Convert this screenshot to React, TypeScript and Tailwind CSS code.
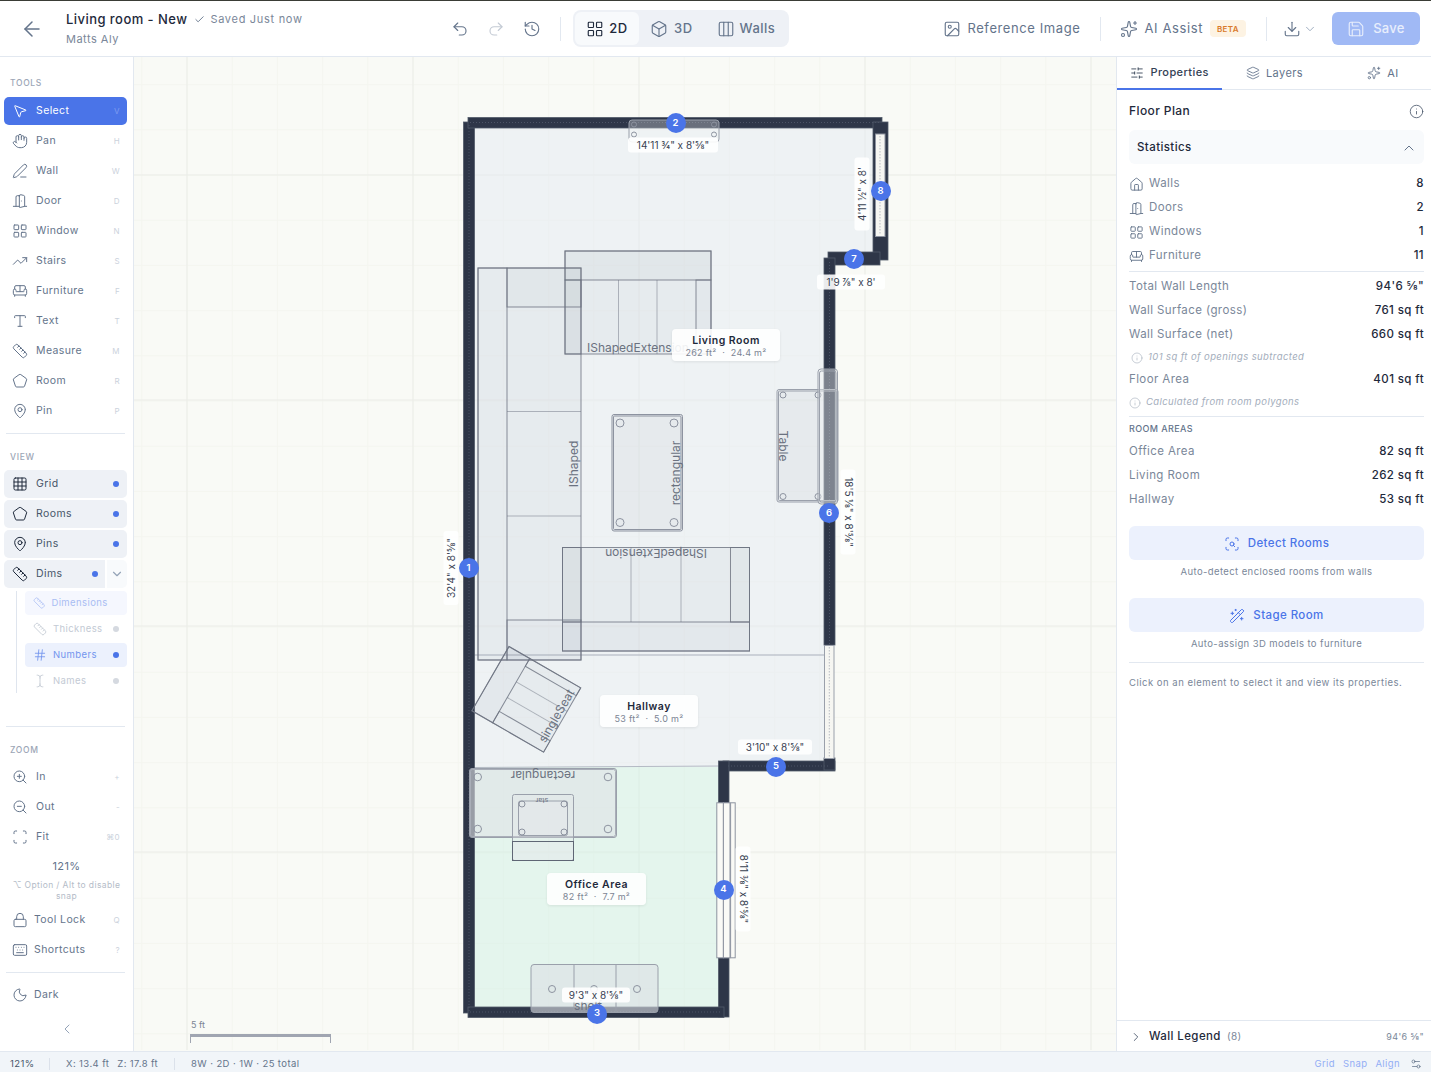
import React from "react";
import {
  ArrowLeft, Box, Check, ChevronDown, ChevronLeft, ChevronRight, ChevronUp, Columns3, DoorOpen, Download, Grid3x3, Hand,
  Hash, History, House, Image, Info, Keyboard, Layers, LayoutGrid, Lock, MapPin, Moon, MousePointer2, PenLine, Pentagon,
  Redo2, Ruler, Save, Scan, ScanSearch, Settings2, SlidersHorizontal, Sofa, Sparkles, TextCursor, TrendingUp, Type, Undo2,
  WandSparkles, ZoomIn, ZoomOut,
} from "lucide-react";

type IconType = React.ComponentType<{ size?: number; className?: string; strokeWidth?: number }>;

const tools: [IconType, string, string][] = [
  [Hand, "Pan", "H"],
  [PenLine, "Wall", "W"],
  [DoorOpen, "Door", "D"],
  [LayoutGrid, "Window", "N"],
  [TrendingUp, "Stairs", "S"],
  [Sofa, "Furniture", "F"],
  [Type, "Text", "T"],
  [Ruler, "Measure", "M"],
  [Pentagon, "Room", "R"],
  [MapPin, "Pin", "P"],
];

function SectionLabel({ children }: { children: string }) {
  return <div className="pl-[10px] text-[8.5px] leading-[12px] font-medium tracking-[0.08em] text-[#9ca6b6]">{children}</div>;
}

function ToolRow({ icon: Icon, label, keyName }: { icon: IconType; label: string; keyName: string }) {
  return (
    <div className="mx-[4px] flex h-[28px] w-[123px] items-center gap-[8px] rounded-[5px] pl-[8px] pr-[7px] text-[#64748b]">
      <Icon size={16} strokeWidth={1.5} />
      <span className="flex-1 text-[10.5px]">{label}</span>
      <span className="text-[8px] text-[#cbd2dc]">{keyName}</span>
    </div>
  );
}

function ViewRow({ icon: Icon, label }: { icon: IconType; label: string }) {
  return (
    <div className="mx-[4px] flex h-[28px] w-[123px] items-center gap-[8px] rounded-[5px] bg-[#eef1f6] pl-[8px] pr-[8px] text-[#1e293b]">
      <Icon size={16} strokeWidth={1.5} />
      <span className="flex-1 text-[10.5px] text-[#475569]">{label}</span>
      <span className="h-[6px] w-[6px] rounded-full bg-[#4a74e8]" />
    </div>
  );
}

function SubRow({ icon: Icon, label, box, dot, text }: { icon: IconType; label: string; box: string; dot: string; text: string }) {
  return (
    <div className={`flex h-[24px] w-[102px] items-center gap-[6px] rounded-[4px] pl-[8px] pr-[8px] ${box} ${text}`}>
      <Icon size={14} strokeWidth={1.5} />
      <span className="flex-1 text-[9.5px]">{label}</span>
      <span className={`h-[6px] w-[6px] rounded-full ${dot}`} />
    </div>
  );
}

function Sidebar() {
  return (
    <aside className="flex h-full w-[134px] shrink-0 flex-col border-r border-[#e2e8f0] bg-white pt-[20px]">
      <SectionLabel>TOOLS</SectionLabel>
      <div className="mt-[8px] flex flex-col gap-[2px]">
        <div className="mx-[4px] flex h-[28px] w-[123px] items-center gap-[8px] rounded-[5px] bg-[#4a74e8] pl-[8px] pr-[7px] text-white">
          <MousePointer2 size={16} strokeWidth={1.5} />
          <span className="flex-1 text-[10.5px]">Select</span>
          <span className="text-[8px] text-[#7d9bf0]">V</span>
        </div>
        {tools.map(([icon, label, keyName]) => (
          <ToolRow key={label} icon={icon} label={label} keyName={keyName} />
        ))}
      </div>
      <div className="mx-[6px] mt-[8px] h-px w-[119px] bg-[#e2e8f0]" />
      <div className="mt-[17px]">
        <SectionLabel>VIEW</SectionLabel>
      </div>
      <div className="mt-[7px] flex flex-col gap-[2px]">
        <ViewRow icon={Grid3x3} label="Grid" />
        <ViewRow icon={Pentagon} label="Rooms" />
        <ViewRow icon={MapPin} label="Pins" />
        <div className="mx-[4px] flex h-[28px] w-[123px] gap-[2px]">
          <div className="flex w-[101px] items-center gap-[8px] rounded-l-[5px] bg-[#eef1f6] pl-[8px] pr-[7px] text-[#1e293b]">
            <Ruler size={16} strokeWidth={1.5} />
            <span className="flex-1 text-[10.5px] text-[#475569]">Dims</span>
            <span className="h-[6px] w-[6px] rounded-full bg-[#4a74e8]" />
          </div>
          <div className="flex flex-1 items-center justify-center rounded-r-[5px] bg-[#f8fafc] text-[#94a3b8]">
            <ChevronDown size={14} />
          </div>
        </div>
      </div>
      <div className="ml-[16px] mt-[3px] flex h-[102px] w-[111px] flex-col gap-[2px] border-l border-[#dfe5ee] pl-[8px]">
        <SubRow icon={Ruler} label="Dimensions" box="bg-[#f5f7fe]" dot="" text="text-[#a9bdf3]" />
        <SubRow icon={Ruler} label="Thickness" box="" dot="bg-[#d5d9e0]" text="text-[#c3cad4]" />
        <SubRow icon={Hash} label="Numbers" box="bg-[#ecf1fd]" dot="bg-[#4a74e8]" text="text-[#7295ee]" />
        <SubRow icon={TextCursor} label="Names" box="" dot="bg-[#d5d9e0]" text="text-[#c3cad4]" />
      </div>
      <div className="mx-[6px] mt-[33px] h-px w-[119px] bg-[#e2e8f0]" />
      <div className="mt-[17px]">
        <SectionLabel>ZOOM</SectionLabel>
      </div>
      <div className="mt-[7px] flex flex-col gap-[2px]">
        <ToolRow icon={ZoomIn} label="In" keyName="+" />
        <ToolRow icon={ZoomOut} label="Out" keyName="-" />
        <ToolRow icon={Scan} label="Fit" keyName="⌘0" />
      </div>
      <div className="mt-[8px] text-center text-[11px] leading-[14px] text-[#64748b]">121%</div>
      <div className="mt-[7px] px-[8px] text-center text-[8.5px] leading-[11px] text-[#b4bcc8]">⌥ Option / Alt to disable snap</div>
      <div className="mt-[4px] flex flex-col gap-[2px]">
        <div className="mx-[4px] flex h-[28px] w-[123px] items-center gap-[6px] pl-[8px] pr-[7px] text-[#64748b]">
          <Lock size={16} strokeWidth={1.5} />
          <span className="flex-1 text-[10.5px]">Tool Lock</span>
          <span className="text-[8px] text-[#cbd2dc]">Q</span>
        </div>
        <div className="mx-[4px] flex h-[28px] w-[123px] items-center gap-[6px] pl-[8px] pr-[7px] text-[#64748b]">
          <Keyboard size={16} strokeWidth={1.5} />
          <span className="flex-1 text-[10.5px]">Shortcuts</span>
          <span className="text-[8px] text-[#cbd2dc]">?</span>
        </div>
      </div>
      <div className="mx-[6px] mt-[8px] h-px w-[119px] bg-[#e2e8f0]" />
      <div className="mx-[4px] mt-[8px] flex h-[28px] items-center gap-[6px] pl-[8px] text-[#64748b]">
        <Moon size={16} strokeWidth={1.5} />
        <span className="text-[10.5px]">Dark</span>
      </div>
      <div className="mt-[12px] flex justify-center text-[#94a3b8]">
        <ChevronLeft size={16} strokeWidth={1.5} />
      </div>
    </aside>
  );
}

function Header() {
  return (
    <header className="flex h-[57px] shrink-0 items-center border-t border-b border-t-[#3a3d36] border-b-[#e2e8f0] bg-white">
      <ArrowLeft size={24} strokeWidth={1.5} className="ml-[20px] text-[#64748b]" />
      <div className="ml-[22px] w-[385px]">
        <div className="-mt-[1px] flex items-center">
          <span className="text-[13px] leading-[18px] font-medium tracking-[0.45px] text-[#1e293b]">Living room - New</span>
          <Check size={11} className="ml-[7px] text-[#64748b]" />
          <span className="ml-[5px] text-[11px] tracking-[0.7px] text-[#7a8799]">Saved Just now</span>
        </div>
        <div className="mt-[4px] text-[11px] leading-[14px] tracking-[0.5px] text-[#7a8799]">Matts Aly</div>
      </div>
      <Undo2 size={18} strokeWidth={1.5} className="text-[#64748b]" />
      <Redo2 size={18} strokeWidth={1.5} className="ml-[18px] text-[#c3cad4]" />
      <History size={18} strokeWidth={1.5} className="ml-[18px] text-[#64748b]" />
      <div className="ml-[19px] h-[24px] w-px bg-[#e2e8f0]" />
      <div className="ml-[12px] flex h-[37px] w-[216px] items-center rounded-[8px] bg-[#eef1f6] p-[2px] tracking-[0.5px]">
        <div className="flex h-[33px] w-[64px] items-center justify-center gap-[5px] rounded-[6px] bg-[#f8fafc] text-[#1e293b]">
          <LayoutGrid size={18} strokeWidth={1.5} />
          <span className="text-[13px] font-medium">2D</span>
        </div>
        <div className="ml-[11px] flex items-center gap-[6px] text-[#64748b]">
          <Box size={18} strokeWidth={1.5} />
          <span className="text-[13px] font-medium">3D</span>
        </div>
        <div className="ml-[24px] flex items-center gap-[5px] text-[#64748b]">
          <Columns3 size={18} strokeWidth={1.5} />
          <span className="text-[13px] font-medium">Walls</span>
        </div>
      </div>
      <div className="ml-auto mr-[11px] flex items-center">
        <div className="flex items-center gap-[6px] text-[#64748b]">
          <Image size={18} strokeWidth={1.5} />
          <span className="text-[13px] tracking-[0.6px]">Reference Image</span>
        </div>
        <div className="ml-[19px] h-[24px] w-px bg-[#e2e8f0]" />
        <div className="ml-[19px] flex items-center gap-[7px] text-[#64748b]">
          <Sparkles size={18} strokeWidth={1.5} />
          <span className="text-[13px] tracking-[0.6px]">AI Assist</span>
        </div>
        <span className="ml-[7px] flex h-[17px] w-[36px] items-center justify-center rounded-[4px] bg-[#fdf3e3] text-[8px] font-semibold tracking-[0.4px] text-[#d97a2b]">BETA</span>
        <div className="ml-[20px] h-[24px] w-px bg-[#e2e8f0]" />
        <Download size={18} strokeWidth={1.5} className="ml-[16px] text-[#64748b]" />
        <ChevronDown size={14} strokeWidth={1.5} className="ml-[2px] text-[#94a3b8]" />
        <div className="ml-[15px] flex h-[33px] w-[88px] items-center justify-center gap-[8px] rounded-[6px] bg-[#a0b9f5] text-[#e8eefc]">
          <Save size={18} strokeWidth={1.5} />
          <span className="text-[13px] font-medium tracking-[0.3px]">Save</span>
        </div>
      </div>
    </header>
  );
}

const minorX = Array.from({ length: 22 }, (_, i) => 141.8 + i * 45.2);
const minorY = Array.from({ length: 23 }, (_, i) => 84.6 + i * 45.2);
const majorX = [187, 413, 639, 865, 1091];
const majorY = [175, 400, 626, 852];

const furn = "fill-[#64748b]/[0.05] stroke-[#6b7280]/80";
const knob = "fill-none stroke-[#8d93a0]";
const lbl = "fill-[#6b7280] text-[12px] font-['Inter',sans-serif]";

function FloorPlan() {
  return (
    <svg className="absolute left-0 top-0 h-[993px] w-[982px]" viewBox="134 57 982 993">
      {minorX.map((x) => <line key={x} x1={x} x2={x} y1={57} y2={1050} stroke="#f4f5f0" />)}
      {minorY.map((y) => <line key={y} x1={134} x2={1116} y1={y} y2={y} stroke="#f4f5f0" />)}
      {majorX.map((x) => <line key={x} x1={x} x2={x} y1={57} y2={1050} stroke="#ebede8" />)}
      {majorY.map((y) => <line key={y} x1={134} x2={1116} y1={y} y2={y} stroke="#ebede8" />)}

      {/* rooms */}
      <polygon points="474,127 875,127 875,252 829,252 829,766 720,767 474,767" fill="#e4eaf2" fillOpacity="0.5" />
      <polygon points="474,767 720,767 720,1007 474,1007" fill="#d0f0e4" fillOpacity="0.5" />
      <line x1="474" x2="825" y1="655" y2="655" stroke="#aab0bb" strokeWidth="1.2" />
      <line x1="474" x2="722" y1="767.5" y2="766" stroke="#b4bac4" />

      {/* walls */}
      <g fill="#2e3648" stroke="#525a69" strokeWidth="0.8">
        <rect x="463.5" y="122" width="11" height="891" />
        <rect x="468" y="117.5" width="414" height="10.5" />
        <rect x="873" y="122" width="15" height="138" />
        <rect x="828" y="252" width="52" height="13" />
        <rect x="824" y="258" width="11" height="387" />
        <rect x="723" y="761" width="112" height="10" />
        <rect x="824" y="758" width="11" height="12" />
        <rect x="718.5" y="761" width="10.5" height="42" />
        <rect x="718.5" y="958" width="10.5" height="59" />
        <rect x="468" y="1007" width="256" height="10.5" />
      </g>
      <g stroke="#4b5365" strokeDasharray="1 2" fill="none">
        <line x1="469" x2="469" y1="125" y2="1013" />
        <line x1="470" x2="880" y1="122.5" y2="122.5" />
        <line x1="470" x2="720" y1="1012" y2="1012" />
        <line x1="829.5" x2="829.5" y1="262" y2="645" />
        <line x1="728" x2="830" y1="766" y2="766" />
      </g>

      {/* windows */}
      <rect x="875.5" y="134" width="9.5" height="102.5" fill="#f6f6f2" stroke="#8d93a0" />
      <line x1="880" x2="880" y1="136" y2="235" stroke="#b9bdc4" strokeDasharray="1.5 1.5" />
      <rect x="824.5" y="645.5" width="9.5" height="113" fill="#f6f6f2" stroke="#9aa0ab" />
      <line x1="829.3" x2="829.3" y1="647" y2="757" stroke="#b9bdc4" strokeDasharray="1.5 1.5" />
      <g fill="#fafaf6" stroke="#8d93a0">
        <rect x="716.8" y="802.8" width="6.6" height="155" />
        <rect x="723.4" y="802.8" width="6.6" height="155" />
        <rect x="730.6" y="802.8" width="4.6" height="155" />
      </g>

      {/* upper sofa */}
      <g className={furn}>
        <rect x="565" y="251" width="146" height="103" />
        <rect x="565" y="251" width="146" height="29" className="fill-[#64748b]/[0.03]" />
        <rect x="565" y="280" width="16" height="74" className="fill-[#64748b]/[0.04]" />
        <rect x="696" y="280" width="15" height="74" className="fill-[#64748b]/[0.02]" />
        <line x1="618.5" x2="618.5" y1="280" y2="354" opacity="0.6" />
        <line x1="657" x2="657" y1="280" y2="354" opacity="0.6" />
      </g>
      <text x="587" y="352" className={lbl}>IShapedExtension</text>

      {/* long sofa */}
      <g className={furn}>
        <rect x="478" y="268" width="103" height="392" />
        <rect x="478" y="268" width="29" height="392" className="fill-transparent" />
        <rect x="507" y="268" width="74" height="39" className="fill-[#64748b]/[0.03]" />
        <rect x="507" y="620" width="74" height="40" className="fill-[#64748b]/[0.02]" />
        <line x1="507" x2="581" y1="411.5" y2="411.5" opacity="0.6" />
        <line x1="507" x2="581" y1="516" y2="516" opacity="0.6" />
      </g>
      <text transform="translate(578 464) rotate(-90)" textAnchor="middle" className={lbl}>IShaped</text>

      {/* coffee table */}
      <g className="fill-[#64748b]/[0.06] stroke-[#8d93a0]">
        <rect x="612" y="414.5" width="70.5" height="116.5" rx="2" />
        <rect x="613.5" y="416" width="67.5" height="113.5" rx="1" fill="none" />
      </g>
      <circle cx="620" cy="423" r="4" className={knob} />
      <circle cx="674" cy="423" r="4" className={knob} />
      <circle cx="620" cy="522.5" r="4" className={knob} />
      <circle cx="674" cy="522.5" r="4" className={knob} />
      <text transform="translate(680 473) rotate(-90)" textAnchor="middle" className={lbl}>rectangular</text>

      {/* lower sofa */}
      <g className={furn}>
        <rect x="562.5" y="547.5" width="187" height="103.5" />
        <rect x="562.5" y="622" width="187" height="29" className="fill-[#64748b]/[0.02]" />
        <rect x="562.5" y="547.5" width="18.5" height="74.5" className="fill-[#64748b]/[0.03]" />
        <rect x="730.5" y="547.5" width="19" height="74.5" className="fill-[#64748b]/[0.03]" />
        <line x1="631" x2="631" y1="547.5" y2="622" opacity="0.6" />
        <line x1="681" x2="681" y1="547.5" y2="622" opacity="0.6" />
      </g>
      <text transform="translate(656 549) rotate(180)" textAnchor="middle" className={lbl}>IShapedExtension</text>

      {/* side table and console */}
      <g className="fill-[#64748b]/[0.06] stroke-[#9aa0ab]">
        <rect x="777" y="389.5" width="61" height="112.5" rx="2" />
        <rect x="778.5" y="391" width="58" height="109.5" rx="1" fill="none" />
      </g>
      <circle cx="783" cy="395" r="3" className={knob} />
      <circle cx="818" cy="395" r="3" className={knob} />
      <circle cx="783" cy="496.5" r="3" className={knob} />
      <circle cx="818" cy="496.5" r="3" className={knob} />
      <text transform="translate(779 446) rotate(90)" textAnchor="middle" className={lbl}>Table</text>
      <rect x="818" y="369" width="19.5" height="135" rx="3" fill="#f3f4f6" fillOpacity="0.4" stroke="#9aa0ab" />
      <rect x="819.5" y="371" width="16.5" height="131" rx="2" fill="none" stroke="#9aa0ab" />

      {/* armchair */}
      <g transform="translate(526.3 699.3) rotate(30)" className={furn}>
        <rect x="-41.4" y="-37.1" width="82.8" height="74.2" />
        <rect x="-41.4" y="-37.1" width="24" height="74.2" className="fill-[#64748b]/[0.02]" />
        <rect x="-17.4" y="-37.1" width="58.8" height="9" className="fill-transparent" />
        <rect x="-17.4" y="24" width="58.8" height="13.1" className="fill-transparent" />
        <line x1="-17.4" x2="41.4" y1="-10" y2="-10" opacity="0.6" />
        <line x1="-17.4" x2="41.4" y1="8" y2="8" opacity="0.6" />
      </g>
      <text transform="translate(560 718) rotate(-60)" textAnchor="middle" className={lbl}>singleSeat</text>

      {/* desk, chair */}
      <rect x="469.5" y="768.5" width="147" height="69" rx="2.5" fill="#dfe2e6" fillOpacity="0.6" stroke="#9aa0ab" />
      <rect x="470.5" y="769.5" width="145" height="67" rx="2" fill="none" stroke="#a9aeb8" />
      <circle cx="477.7" cy="777" r="3.8" className={knob} />
      <circle cx="608" cy="777" r="3.8" className={knob} />
      <circle cx="477.7" cy="829" r="3.8" className={knob} />
      <circle cx="608" cy="829" r="3.8" className={knob} />
      <text transform="translate(543 771) rotate(180)" textAnchor="middle" className={lbl}>rectangular</text>
      <rect x="512.5" y="794.5" width="61" height="66" rx="2" fill="#e5e7eb" fillOpacity="0.3" stroke="#9aa0ab" />
      <rect x="518.5" y="801" width="49" height="34.5" rx="2" fill="#e5e7eb" fillOpacity="0.4" stroke="#9aa0ab" />
      <rect x="512.5" y="841.5" width="61" height="19" fill="#e5e7eb" fillOpacity="0.3" stroke="#5f6675" />
      <circle cx="522" cy="804" r="3" className={knob} />
      <circle cx="564" cy="804" r="3" className={knob} />
      <circle cx="522" cy="832" r="3" className={knob} />
      <circle cx="564" cy="832" r="3" className={knob} />
      <text transform="translate(542 798) rotate(180)" textAnchor="middle" className="fill-[#6b7280] text-[7px]">star</text>

      {/* shelf */}
      <rect x="531" y="964.5" width="127" height="48" rx="3" fill="#dcdfe4" fillOpacity="0.6" stroke="#9aa0ab" />
      <line x1="574" x2="574" y1="965" y2="1012" stroke="#9aa0ab" />
      <line x1="616" x2="616" y1="965" y2="1012" stroke="#9aa0ab" />
      <circle cx="552" cy="989" r="3.5" className={knob} />
      <circle cx="594" cy="989" r="3.5" className={knob} />
      <circle cx="637" cy="989" r="3.5" className={knob} />
      <text x="588" y="1010" textAnchor="middle" className={lbl}>shelf</text>

      {/* console behind dim 2 */}
      <rect x="629" y="120" width="90" height="22" rx="3" fill="#f3f4f6" fillOpacity="0.3" stroke="#9aa0ab" />
      <circle cx="634" cy="124.5" r="2.5" className={knob} />
      <circle cx="714" cy="124.5" r="2.5" className={knob} />
      <circle cx="634" cy="134.5" r="2.5" className={knob} />
      <circle cx="714" cy="134.5" r="2.5" className={knob} />
    </svg>
  );
}

function Dim({ className, children }: { className: string; children: string }) {
  return (
    <div className={`absolute flex h-[15px] -translate-x-1/2 -translate-y-1/2 items-center justify-center rounded-[3px] bg-white/90 text-[10px] whitespace-nowrap text-[#374151] ${className}`}>
      {children}
    </div>
  );
}

function Badge({ className, children }: { className: string; children: string }) {
  return (
    <div className={`absolute flex h-[20px] w-[20px] -translate-x-1/2 -translate-y-1/2 items-center justify-center rounded-full bg-[#4a74e8] text-[9.5px] font-semibold text-white ${className}`}>
      {children}
    </div>
  );
}

function RoomTag({ className, name, area }: { className: string; name: string; area: string }) {
  return (
    <div className={`absolute flex h-[32px] flex-col items-center justify-center rounded-[4px] bg-white/90 shadow-[0_1px_3px_rgba(0,0,0,0.08)] ${className}`}>
      <div className="pt-[2px] text-[10.5px] leading-[12px] font-semibold tracking-[0.5px] text-[#1e293b]">{name}</div>
      <div className="text-[9px] leading-[11px] tracking-[0.3px] whitespace-pre text-[#7c8594]">{area}</div>
    </div>
  );
}

function Canvas() {
  return (
    <main className="relative h-full flex-1 overflow-hidden bg-[#f9faf6] tracking-normal">
      <FloorPlan />
      <Dim className="left-[539px] top-[88px] w-[90px]">14'11 ¾" x 8'⅝"</Dim>
      <Dim className="left-[728px] top-[137px] w-[73px] -rotate-90">4'11 ½" x 8'</Dim>
      <Dim className="left-[717px] top-[225px] w-[68px]">1'9 ⅞" x 8'</Dim>
      <Dim className="left-[317px] top-[511px] w-[74px] -rotate-90">32'4" x 8'⅝"</Dim>
      <Dim className="left-[714px] top-[455px] w-[85px] rotate-90">18'5 ⅛" x 8'⅝"</Dim>
      <Dim className="left-[641px] top-[690px] w-[74px]">3'10" x 8'⅝"</Dim>
      <Dim className="left-[609px] top-[832px] w-[85px] rotate-90">8'11 ⅜" x 8'⅝"</Dim>
      <Dim className="left-[462px] top-[938px] w-[68px]">9'3" x 8'⅝"</Dim>

      <Badge className="left-[334.5px] top-[511px]">1</Badge>
      <Badge className="left-[541.5px] top-[66px]">2</Badge>
      <Badge className="left-[463px] top-[956.5px]">3</Badge>
      <Badge className="left-[589.5px] top-[832.5px]">4</Badge>
      <Badge className="left-[642px] top-[709.5px]">5</Badge>
      <Badge className="left-[695px] top-[456px]">6</Badge>
      <Badge className="left-[720px] top-[202px]">7</Badge>
      <Badge className="left-[746.5px] top-[134px]">8</Badge>

      <RoomTag className="left-[538px] top-[272px] w-[108px]" name="Living Room" area="262 ft²  ·  24.4 m²" />
      <RoomTag className="left-[466px] top-[638px] w-[98px]" name="Hallway" area="53 ft²  ·  5.0 m²" />
      <RoomTag className="left-[413px] top-[816px] w-[99px]" name="Office Area" area="82 ft²  ·  7.7 m²" />

      <div className="absolute left-[56px] top-[962px] w-[141px]">
        <div className="pl-[1px] text-[9px] leading-[12px] text-[#7c8594]">5 ft</div>
        <div className="mt-[3px] h-[9px] border-x border-t-[3px] border-x-[#a0a5b1] border-t-[#a0a5b1]" />
      </div>
    </main>
  );
}

function StatRow({ icon: Icon, label, value }: { icon: IconType; label: string; value: string }) {
  return (
    <div className="flex h-[24px] items-center text-[11.5px]">
      <Icon size={15} strokeWidth={1.5} className="text-[#64748b]" />
      <span className="ml-[5px] flex-1 text-[#7a8799]">{label}</span>
      <span className="font-medium text-[#1e293b]">{value}</span>
    </div>
  );
}

function Row({ label, value }: { label: string; value: string }) {
  return (
    <div className="flex h-[24px] items-center justify-between text-[11.5px]">
      <span className="text-[#7a8799]">{label}</span>
      <span className="font-medium text-[#1e293b]">{value}</span>
    </div>
  );
}

function Note({ indent, children }: { indent: string; children: string }) {
  return (
    <div className={`flex h-[21px] items-center gap-[5px] text-[9.5px] text-[#a3adbb] italic ${indent}`}>
      <Info size={12} strokeWidth={1.2} />
      <span>{children}</span>
    </div>
  );
}

function RightPanel() {
  return (
    <aside className="flex h-full w-[315px] shrink-0 flex-col border-l border-[#e2e8f0] bg-white">
      <div className="flex h-[33px] shrink-0 border-b border-[#e2e8f0] text-[11px]">
        <div className="-mb-px flex w-[106px] items-center justify-center gap-[6px] border-b-2 border-[#4a74e8] font-medium text-[#334155]">
          <SlidersHorizontal size={14} strokeWidth={1.5} />
          Properties
        </div>
        <div className="flex w-[105px] items-center justify-center gap-[6px] text-[#64748b]">
          <Layers size={14} strokeWidth={1.5} />
          Layers
        </div>
        <div className="flex w-[105px] items-center justify-center gap-[6px] pl-[8px] text-[#64748b]">
          <Sparkles size={14} strokeWidth={1.5} />
          AI
        </div>
      </div>
      <div className="flex flex-1 flex-col pl-[12px] pr-[7px]">
        <div className="flex h-[40px] shrink-0 items-center justify-between pt-[2px]">
          <span className="text-[12px] font-medium text-[#1e293b]">Floor Plan</span>
          <Info size={15} strokeWidth={1.3} className="text-[#475569]" />
        </div>
        <div className="flex h-[34px] shrink-0 items-center justify-between rounded-[6px] bg-[#f8fafc] pl-[8px] pr-[7px] pt-[1px]">
          <span className="text-[11.5px] font-medium text-[#1e293b]">Statistics</span>
          <ChevronUp size={16} strokeWidth={1.5} className="text-[#64748b]" />
        </div>
        <div className="mt-[8px]">
          <StatRow icon={House} label="Walls" value="8" />
          <StatRow icon={DoorOpen} label="Doors" value="2" />
          <StatRow icon={LayoutGrid} label="Windows" value="1" />
          <StatRow icon={Sofa} label="Furniture" value="11" />
        </div>
        <div className="mt-[3px] border-t border-[#e2e8f0] pt-[3px]">
          <Row label="Total Wall Length" value={`94'6 ⅝"`} />
          <Row label="Wall Surface (gross)" value="761 sq ft" />
          <Row label="Wall Surface (net)" value="660 sq ft" />
          <Note indent="pl-[2px]">101 sq ft of openings subtracted</Note>
          <Row label="Floor Area" value="401 sq ft" />
          <Note indent="">Calculated from room polygons</Note>
        </div>
        <div className="mt-[3px] border-t border-[#e2e8f0] pt-[6px]">
          <div className="text-[9px] leading-[12px] font-medium text-[#64748b]">ROOM AREAS</div>
          <div className="mt-[5px]">
            <Row label="Office Area" value="82 sq ft" />
            <Row label="Living Room" value="262 sq ft" />
            <Row label="Hallway" value="53 sq ft" />
          </div>
        </div>
        <div className="mt-[14px] flex h-[34px] shrink-0 items-center justify-center gap-[8px] rounded-[6px] bg-[#ecf1fd] pt-[1px] text-[11.5px] font-medium text-[#4a74e8]">
          <ScanSearch size={16} strokeWidth={1.5} />
          Detect Rooms
        </div>
        <div className="mt-[5px] text-center text-[9.5px] leading-[13px] text-[#7a8799]">Auto-detect enclosed rooms from walls</div>
        <div className="mt-[20px] flex h-[34px] shrink-0 items-center justify-center gap-[8px] rounded-[6px] bg-[#ecf1fd] pt-[1px] text-[11.5px] font-medium text-[#4a74e8]">
          <WandSparkles size={16} strokeWidth={1.5} />
          Stage Room
        </div>
        <div className="mt-[5px] text-center text-[9.5px] leading-[13px] text-[#7a8799]">Auto-assign 3D models to furniture</div>
        <div className="mt-[12px] border-t border-[#e2e8f0] pt-[13px] text-[9.5px] leading-[13px] tracking-[0.5px] text-[#7a8799]">Click on an element to select it and view its properties.</div>
      </div>
      <div className="flex h-[31px] shrink-0 items-center border-t border-[#e2e8f0] pl-[12px] pr-[7px] pt-[1px]">
        <ChevronRight size={14} strokeWidth={1.5} className="text-[#475569]" />
        <span className="ml-[6px] text-[11.5px] font-medium text-[#1e293b]">Wall Legend</span>
        <span className="ml-[6px] flex-1 text-[10px] text-[#7a8799]">(8)</span>
        <span className="text-[9px] text-[#7a8799]">94'6 ⅝"</span>
      </div>
    </aside>
  );
}

function StatusBar() {
  return (
    <footer className="flex h-[21px] shrink-0 items-center border-t border-[#e2e8f0] bg-[#f1f5f9] pt-[4px] text-[9.5px] text-[#64748b]">
      <span className="ml-[10px] w-[39px] text-[#475569]">121%</span>
      <span className="h-[12px] w-px bg-[#dbe1ea]" />
      <span className="ml-[16px]">X: 13.4 ft</span>
      <span className="ml-[8px]">Z: 17.8 ft</span>
      <span className="ml-[16px] h-[12px] w-px bg-[#dbe1ea]" />
      <span className="ml-[16px]">8W · 2D · 1W · 25 total</span>
      <div className="ml-auto flex items-center gap-[8px] text-[#93aef5]">
        <span>Grid</span>
        <span>Snap</span>
        <span>Align</span>
      </div>
      <Settings2 size={12} strokeWidth={1.5} className="ml-[10px] mr-[9px] text-[#64748b]" />
    </footer>
  );
}

export default function App() {
  return (
    <div className="flex h-[1072px] w-[1431px] flex-col overflow-hidden bg-white font-['Inter','Liberation_Sans',sans-serif] tracking-[0.4px]">
      <Header />
      <div className="flex min-h-0 flex-1">
        <Sidebar />
        <Canvas />
        <RightPanel />
      </div>
      <StatusBar />
    </div>
  );
}
